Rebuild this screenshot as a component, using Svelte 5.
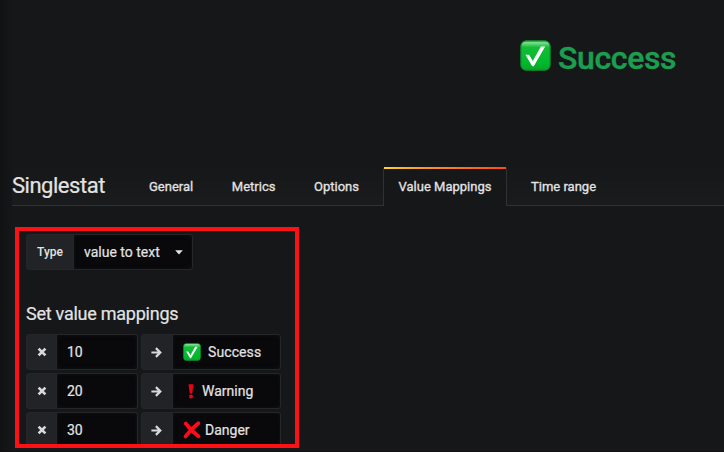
<script>
  const tabs = ['General', 'Metrics', 'Options', 'Value Mappings', 'Time range'];
  const active = 'Value Mappings';
  const mappings = [
    { value: '10', text: 'Success', icon: 'check' },
    { value: '20', text: 'Warning', icon: 'bang' },
    { value: '30', text: 'Danger', icon: 'cross' }
  ];
</script>

{#snippet check(id)}
  <svg class="tick" viewBox="0 0 32 32" aria-hidden="true">
    <defs>
      <linearGradient id={id} x1="0" y1="0" x2="0" y2="1">
        <stop offset="0" stop-color="#2fbf4b" />
        <stop offset=".06" stop-color="#7be08c" />
        <stop offset=".22" stop-color="#12bd37" />
        <stop offset=".75" stop-color="#00b92c" />
        <stop offset="1" stop-color="#08a52d" />
      </linearGradient>
    </defs>
    <rect x=".9" y=".9" width="30.2" height="30.2" rx="5.5" fill="url(#{id})" stroke="#128a2e" stroke-width="1.2" />
    <path d="M5.6 15.3H9.4L13.2 21.6L21.6 6.6H26L14.2 27.2H12.6Z" fill="#fff" />
  </svg>
{/snippet}

<div class="page">
  <section class="stat">
    {@render check('big-green')}
    <span>Success</span>
  </section>

  <header class="toolbar">
    <h1>Singlestat</h1>
    <nav>
      {#each tabs as tab}
        <a class:active={tab === active}>{tab}</a>
      {/each}
    </nav>
  </header>

  <main class="frame">
    <div class="row type">
      <label class="label">Type</label>
      <div class="field select">
        <span>value to text</span>
        <svg width="8" height="5" viewBox="0 0 8 5"><path d="M.2 .3H7.8L4 4.4Z" fill="#e3e3e3" /></svg>
      </div>
    </div>

    <h2>Set value mappings</h2>

    {#each mappings as m}
      <div class="row">
        <span class="label icon">
          <svg width="10" height="10" viewBox="0 0 10 10"><path d="M1.6 1.6L8.4 8.4M8.4 1.6L1.6 8.4" stroke="#d8d9da" stroke-width="2.7" /></svg>
        </span>
        <span class="field value">{m.value}</span>
        <span class="label arrow">
          <svg width="11" height="11" viewBox="0 0 11 11"><path d="M.4 5.5H9M4.9 1.1L9.3 5.5L4.9 9.9" fill="none" stroke="#d8d9da" stroke-width="2.2" /></svg>
        </span>
        <span class="field text {m.icon}">
          {#if m.icon === 'check'}
            {@render check('small-green')}
          {:else if m.icon === 'bang'}
            <svg width="6" height="15" viewBox="0 0 6 15"><path d="M.5 .3H5.5L4.2 9.6H1.8Z" fill="#ee001b" /><circle cx="3" cy="12.5" r="2" fill="#ee001b" /></svg>
          {:else}
            <svg width="18" height="18" viewBox="0 0 18 18"><path d="M2.8 2.6C6 7 11 12 15.4 15.3M15.3 2.3C10 6.5 6 11 2.6 15.4" fill="none" stroke="#f80d1b" stroke-width="3.8" stroke-linecap="round" /></svg>
          {/if}
          <span>{m.text}</span>
        </span>
      </div>
    {/each}
  </main>
</div>

<style>
  :global(body) { background: #161719; }
  .page {
    box-sizing: border-box;
    width: 724px;
    height: 452px;
    overflow: hidden;
    background: linear-gradient(90deg, #111214 0, #161719 14px);
    border-bottom: 1px solid #111113;
    color: #e3e3e3;
    font-family: Roboto, "Liberation Sans", sans-serif;
    font-size: 14px;
  }
  svg { display: block; flex: none; }
  .stat {
    box-sizing: border-box;
    height: 167px;
    padding: 40px 0 0 520px;
    display: flex;
    align-items: flex-start;
    gap: 7px;
    color: #1c9e4f;
    font-size: 32px;
    font-weight: 500;
    line-height: 36px;
    letter-spacing: -0.35px;
    -webkit-text-stroke: 0.4px;
    white-space: nowrap;
  }
  .stat .tick { width: 31px; height: 31px; }
  .toolbar {
    box-sizing: border-box;
    height: 39px;
    margin-left: 12px;
    display: flex;
    background: linear-gradient(#161719, #1a1b1c);
    border-bottom: 1px solid #303133;
  }
  h1 {
    width: 122px;
    margin: 0;
    font-size: 22px;
    font-weight: 400;
    line-height: 37px;
    letter-spacing: -0.48px;
    -webkit-text-stroke: 0.2px;
  }
  nav { display: flex; height: 39px; }
  a {
    box-sizing: border-box;
    height: 39px;
    padding: 1px 15px 0;
    margin-right: 8.6px;
    font-size: 13px;
    font-weight: 400;
    line-height: 38px;
    -webkit-text-stroke: 0.3px;
    white-space: nowrap;
  }
  .active {
    position: relative;
    background: #161719;
    border: solid #303133;
    border-width: 0 1px;
    border-radius: 2px 2px 0 0;
  }
  .active::before {
    content: '';
    position: absolute;
    top: 0;
    left: 0;
    right: 0;
    height: 2px;
    background: linear-gradient(90deg, #ffd22e, #f99b2b 30%, #ff4a18 99%);
  }
  .frame {
    box-sizing: border-box;
    width: 284px;
    height: 221px;
    margin: 21px 0 0 15px;
    padding: 3px 7px;
    border: 4px solid #fd1115;
    overflow: hidden;
  }
  .row { display: flex; height: 36px; margin-bottom: 3px; }
  .label, .field {
    box-sizing: border-box;
    height: 36px;
    display: flex;
    align-items: center;
    border: 1px solid #262628;
    white-space: nowrap;
  }
  .label {
    justify-content: center;
    width: 48px;
    background: #212327;
    border-radius: 3px 0 0 3px;
    font-size: 12px;
    font-weight: 500;
  }
  .field {
    background: #09090b;
    border-left: 0;
    border-radius: 0 3px 3px 0;
    box-shadow: inset 0 0 4px #111214;
    -webkit-text-stroke: 0.2px;
  }
  .select { width: 119px; padding: 0 9px 0 10px; justify-content: space-between; }
  h2 {
    height: 61px;
    margin: 0;
    padding-top: 28px;
    box-sizing: border-box;
    font-size: 18px;
    font-weight: 400;
    line-height: 26px;
    letter-spacing: -0.25px;
    -webkit-text-stroke: 0.2px;
    white-space: nowrap;
  }
  .icon { width: 31px; }
  .value { width: 81px; padding-left: 10px; margin-right: 3px; }
  .arrow { width: 32px; padding-right: 1px; }
  .text { width: 108px; padding-left: 10px; }
  .text .tick { width: 18px; height: 18px; }
  .check { gap: 7px; letter-spacing: 0.1px; }
  .bang { gap: 8px; padding-left: 15px; }
  .cross { gap: 4px; }
</style>
